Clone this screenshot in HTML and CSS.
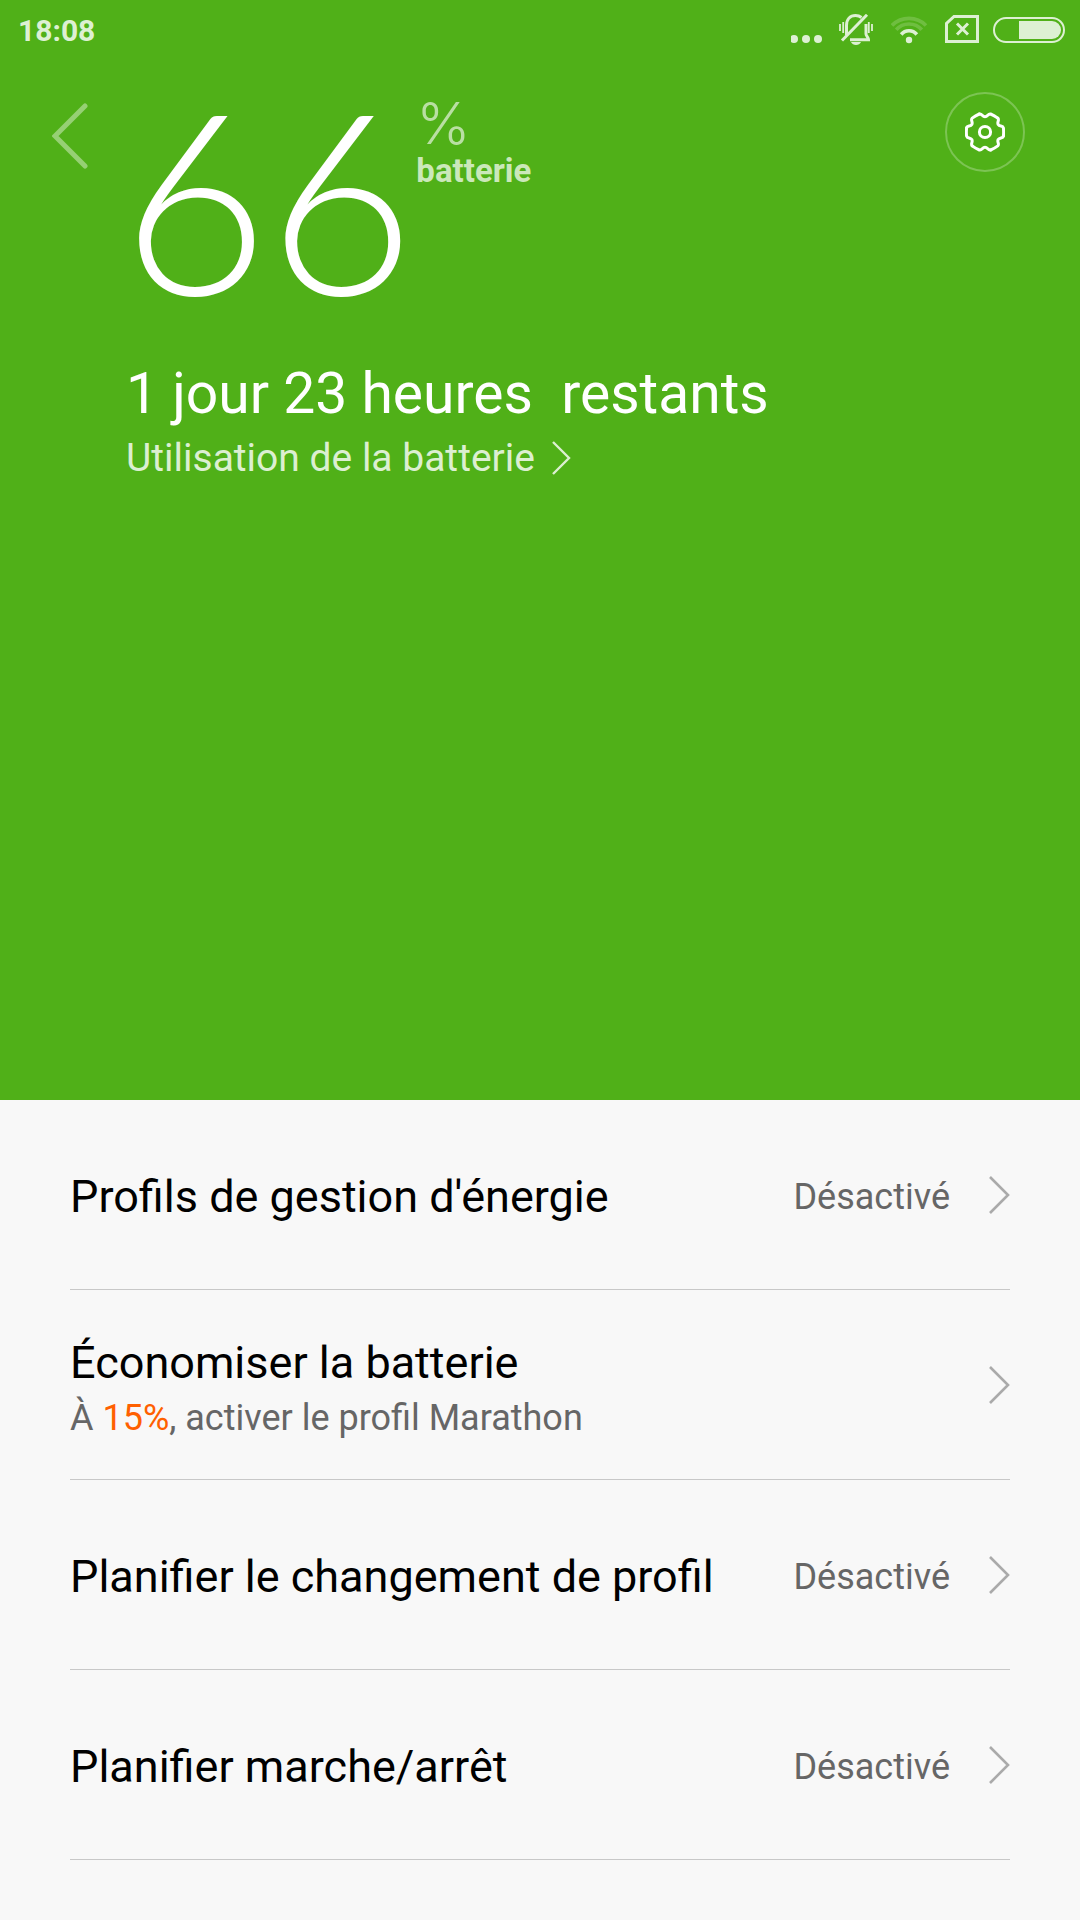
FILE: index.html
```html
<!DOCTYPE html>
<html lang="fr">
<head>
<meta charset="utf-8">
<meta name="viewport" content="width=device-width, initial-scale=1">
<title>Batterie</title>
<link rel="stylesheet" href="styles.css">
</head>
<body>
<section class="hero">
  <div class="status">
    <time class="clock">18:08</time>
    <div class="status-icons">
      <svg viewBox="1 0 34 32" width="34" height="32" aria-hidden="true"><g fill="currentColor"><circle cx="4" cy="25" r="4"/><circle cx="16" cy="25" r="4"/><circle cx="28" cy="25" r="4"/></g></svg>
      <svg viewBox="0 0 38 32" width="38" height="32" aria-hidden="true">
        <path d="M7.500 21V11.500C7.500 5.500 11 1.500 16.500 1.500c2.500 0 4.500.8 6 2M27 10V20c0 2 2.500 3.500 2.500 5.800H11" fill="none" stroke="currentColor" stroke-width="3"/>
        <path d="M3 26.500L28 .8" stroke="currentColor" stroke-width="3"/>
        <path d="M12 28h10c-1.500 4-8.500 4-10 0z" fill="currentColor"/>
        <path d="M1 10v7M4.200 8v11M33 10v7M29.800 8v11" stroke="currentColor" stroke-width="1.800"/>
      </svg>
      <svg viewBox="1 0 40 32" width="40" height="32" aria-hidden="true">
        <circle cx="19" cy="26" r="3.200" fill="currentColor"/>
        <path d="M11.200 20.500a10 10 0 0 1 15.600 0" fill="none" stroke="currentColor" stroke-width="3.600"/>
        <path d="M6.200 15.800a17 17 0 0 1 25.600 0M2 11.400a24 24 0 0 1 34 0" fill="none" stroke="currentColor" stroke-width="3.600" opacity=".22"/>
      </svg>
      <svg viewBox="0 0 34 32" width="34" height="32" aria-hidden="true"><path d="M9 2.500h23.500v25H1.500V9.500z" fill="none" stroke="currentColor" stroke-width="3"/><path d="M12 9.500l11 11M23 9.500l-11 11" stroke="currentColor" stroke-width="3"/></svg>
      <svg viewBox="0 0 72 32" width="72" height="32" aria-hidden="true"><rect x="1" y="4" width="70" height="24" rx="12" fill="none" stroke="currentColor" stroke-width="2"/><path d="M26 7h33a9 9 0 0 1 0 18H26z" fill="currentColor"/></svg>
    </div>
  </div>
  <header class="top">
    <button class="back" type="button" aria-label="Retour"><svg viewBox="0 0 36 66" width="36" height="66"><path d="M33 3L3 33l30 30" fill="none" stroke="currentColor" stroke-width="5" stroke-linecap="round"/></svg></button>
    <h1 class="level"><span class="digits">66</span><span class="unit"><span class="percent">%</span><span class="caption">batterie</span></span></h1>
    <button class="settings" type="button" aria-label="Paramètres"><svg viewBox="-20 -20 40 40" width="40" height="40"><defs><path id="tooth" d="M-5.600-18C-3-18.800-2.800-15.200 0-15.200S3-18.800 5.600-18C7.500-17.200 11-15.200 12.790-13.850"/></defs><g fill="none" stroke="currentColor" stroke-width="3" stroke-linecap="round"><circle r="5.600"/><use href="#tooth"/><use href="#tooth" transform="rotate(60)"/><use href="#tooth" transform="rotate(120)"/><use href="#tooth" transform="rotate(180)"/><use href="#tooth" transform="rotate(240)"/><use href="#tooth" transform="rotate(300)"/></g></svg></button>
  </header>
  <div class="summary">
    <p class="remaining">1 jour 23 heures&nbsp; restants</p>
    <a class="usage" href="#utilisation">Utilisation de la batterie<svg viewBox="0 0 20 36" width="20" height="36" aria-hidden="true"><path d="M2 2l16 16L2 34" fill="none" stroke="currentColor" stroke-width="2.400"/></svg></a>
  </div>
</section>
<main class="list">
  <a class="row" href="#profils"><span class="text"><span class="title">Profils de gestion d'énergie</span></span><span class="value">Désactivé</span><svg class="chevron" viewBox="0 0 22 38" width="22" height="38" aria-hidden="true"><path d="M2 1l18 18L2 37" fill="none" stroke="currentColor" stroke-width="2.600"/></svg></a>
  <a class="row" href="#economiser"><span class="text text-double"><span class="title">Économiser la batterie</span><span class="note">À <span class="threshold">15%</span>, activer le profil Marathon</span></span><svg class="chevron" viewBox="0 0 22 38" width="22" height="38" aria-hidden="true"><path d="M2 1l18 18L2 37" fill="none" stroke="currentColor" stroke-width="2.600"/></svg></a>
  <a class="row" href="#changement"><span class="text"><span class="title">Planifier le changement de profil</span></span><span class="value">Désactivé</span><svg class="chevron" viewBox="0 0 22 38" width="22" height="38" aria-hidden="true"><path d="M2 1l18 18L2 37" fill="none" stroke="currentColor" stroke-width="2.600"/></svg></a>
  <a class="row" href="#marche"><span class="text"><span class="title">Planifier marche/arrêt</span></span><span class="value">Désactivé</span><svg class="chevron" viewBox="0 0 22 38" width="22" height="38" aria-hidden="true"><path d="M2 1l18 18L2 37" fill="none" stroke="currentColor" stroke-width="2.600"/></svg></a>
</main>
</body>
</html>
```
FILE: styles.css
```css
* { box-sizing: border-box; }
body {
  margin: 0;
  min-height: 100vh;
  background: #f8f8f8;
  color: #000;
  font-family: Roboto, sans-serif;
}
a { color: inherit; text-decoration: none; }
button {
  padding: 0;
  border: 0;
  background: none;
  color: inherit;
}
svg { display: block; flex: none; }

.hero {
  padding-bottom: 614px;
  background: #50b018;
  color: #fff;
}
.status {
  display: flex;
  justify-content: space-between;
  align-items: center;
  height: 60px;
  padding: 0 15px 0 18px;
  color: #ddf0d3;
}
.clock { font-size: 30px; font-weight: 700; }
.status-icons { display: flex; gap: 14px; }

.top {
  display: flex;
  align-items: flex-start;
  padding: 32px 55px 0 52px;
}
.back { margin: 11px 34px 0 0; color: #96d074; }
.level {
  display: flex;
  flex: 1;
  gap: 2px;
  margin: 0;
  font-weight: 400;
}
.digits {
  font: 300 252px/212px Lato, sans-serif;
}
.unit { display: flex; flex-direction: column; }
.percent {
  color: #b9dfa3;
  font: 300 58px/62px Inter, sans-serif;
}
.caption {
  color: #cbe8ba;
  font-size: 33px;
  font-weight: 700;
  line-height: 34px;
}
.settings {
  display: grid;
  place-items: center;
  width: 80px;
  height: 80px;
  border: 2px solid #7cc453;
  border-radius: 50%;
}

.summary { padding: 54px 126px 0; }
.remaining {
  margin: 0;
  font-size: 57px;
  line-height: 72px;
}
.usage {
  display: flex;
  align-items: center;
  gap: 16px;
  width: fit-content;
  color: #dcefd1;
  font-size: 39px;
  line-height: 56px;
}

.list { padding: 0 70px; }
.row {
  display: flex;
  align-items: center;
  min-height: 190px;
  border-bottom: 1px solid #c8c8c8;
}
.text { display: flex; flex: 1; flex-direction: column; padding-top: 4px; }
.text-double { padding-top: 10px; }
.title { font-size: 45px; line-height: 56px; }
.note { color: #666; font-size: 36px; line-height: 54px; }
.threshold { color: #ff6000; }
.value { padding-top: 4px; color: #666; font-size: 36px; }
.chevron { margin-left: 38px; color: #aaa; }
```
